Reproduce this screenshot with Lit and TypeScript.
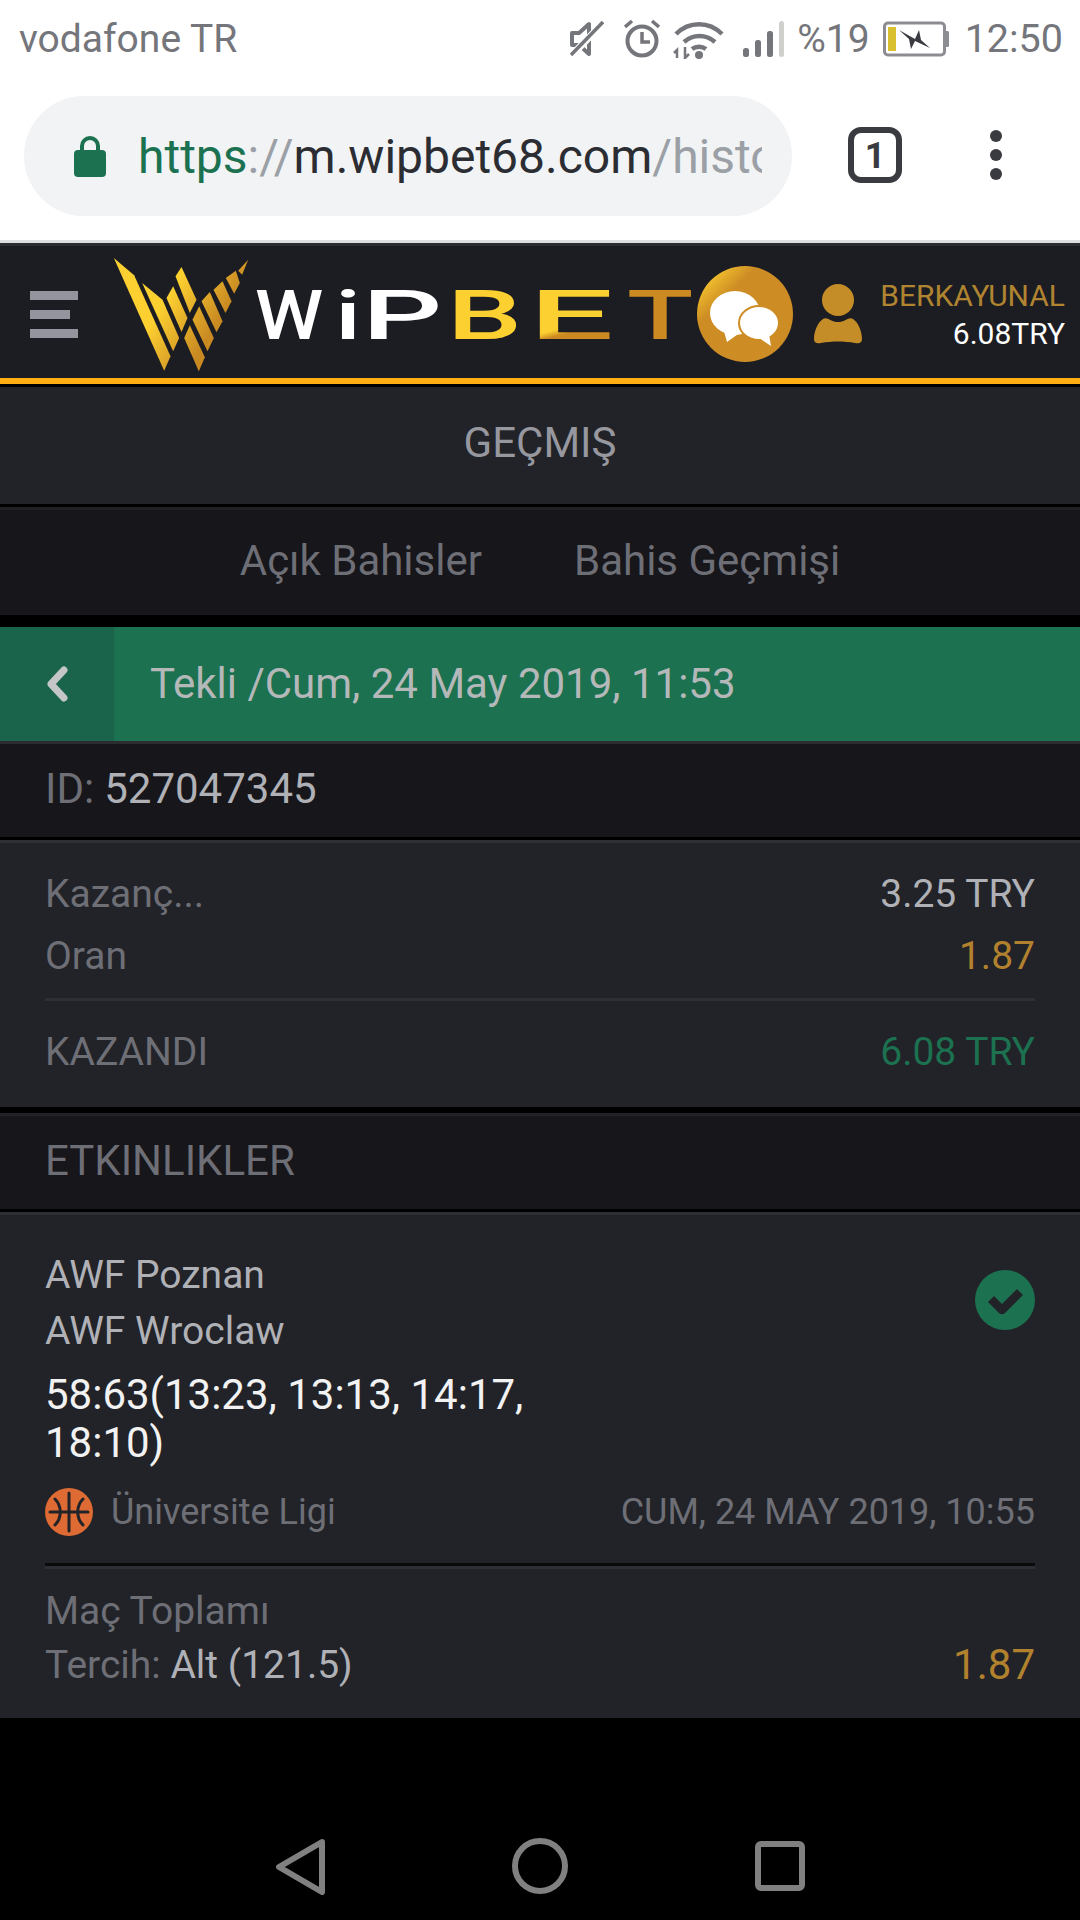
import { LitElement, html, css } from "lit";
import { customElement } from "lit/decorators.js";

@customElement("app-root")
export class AppRoot extends LitElement {
  static styles = css`
    :host { display: block; width: 1080px; height: 1920px; background: #000; font-family: Roboto, "Noto Sans", sans-serif; overflow: hidden; }
    * { box-sizing: border-box; }
    .page { display: flex; flex-direction: column; height: 1920px; }
    .status { height: 77px; background: #fff; display: flex; align-items: center; padding: 0 17px 0 19px; color: #75767b; flex: none; }
    .carrier { font-size: 39px; flex: 1; }
    .sicons { display: flex; align-items: center; }
    .sicons svg { display: block; flex: none; }
    .pct { font-size: 39px; margin: 0 13px 0 12px; }
    .clock { font-size: 39.5px; margin-left: 16px; }
    .mute { margin-right: 20px; }
    .alarm { margin-right: 13px; }
    .wifi { margin-right: 17px; }
    .toolbar { height: 163px; background: #fff; display: flex; align-items: flex-start; padding: 19px 0 0 24px; flex: none; }
    .pill { width: 768px; height: 120px; border-radius: 60px; background: #f1f3f4; display: flex; align-items: center; padding-left: 50px; flex: none; }
    .lock { flex: none; margin-right: 32px; }
    .url { width: 624px; overflow: hidden; white-space: nowrap; font-size: 48px; color: #9aa0a6; }
    .g { color: #1b7150; }
    .h { color: #2b2d33; }
    .tab { margin: 31px 0 0 56px; flex: none; display: block; }
    .dots { margin: 31px 0 0 88px; flex: none; display: block; }
    .hairline { height: 3px; background: #dedede; flex: none; }
    .header { height: 141px; background: #1c1d22; border-top: 3px solid #2b2c31; border-bottom: 6px solid #ffae14; display: flex; align-items: flex-start; flex: none; }
    .burger { display: flex; flex-direction: column; gap: 10px; margin: 45px 0 0 30px; width: 48px; flex: none; }
    .burger i { display: block; height: 9px; background: #93949e; }
    .burger i:nth-child(2) { width: 40px; }
    .mark { margin: 12px 0 0 35px; flex: none; display: block; }
    .word { display: flex; margin: 40px 0 0 8px; width: 441px; flex: none; height: 60px; font-size: 68px; line-height: 60px; font-weight: 500; gap: 18px; white-space: nowrap; }
    .word span { display: block; width: 67px; transform-origin: 0 50%; color: #fff; }
    .word .l1 { transform: translateX(-3px) scaleX(1.14); }
    .word .ii { width: 10px; transform: translateX(-8px) scaleX(1.5); }
    .word .l3 { transform: translateX(-9px) scaleX(1.85); }
    .word .y { color: #fdd031; transform: translateX(-9px) scaleX(1.75); }
    .word .e { background: linear-gradient(150deg, #fdd031 62%, #cc8a22 70%); -webkit-background-clip: text; background-clip: text; color: transparent; width: 38px; transform: translateX(-12px) scaleX(2.2); margin-right: 29px; }
    .word .o { color: #cc8a22; transform: translateX(1px) scaleX(1.6); }
    .chat { flex: none; margin: 20px 0 0 -2px; display: block; }
    .user { flex: none; margin: 38px 0 0 21px; display: block; }
    .acct { flex: 1; margin: 31px 15px 0 0; text-align: right; font-size: 30px; line-height: 38px; color: #fff; }
    .acct div:first-child { color: #b08430; }
    .gap3 { height: 3px; background: #000; flex: none; }
    .title { height: 117px; background: #212328; display: flex; align-items: center; justify-content: center; font-size: 42px; color: #97979f; padding-bottom: 6px; flex: none; }
    .tabs { height: 108px; background: #16161b; border-top: 3px solid #1f1f24; display: flex; align-items: center; justify-content: center; gap: 92px; font-size: 42px; color: #6e6f76; padding-bottom: 4px; flex: none; }
    .gap12 { height: 12px; background: #000; flex: none; }
    .green { height: 117px; background: #1c7150; border-bottom: 3px solid #2a2c30; display: flex; align-items: stretch; flex: none; }
    .back { width: 114px; background: #19644a; display: flex; align-items: center; justify-content: center; flex: none; }
    .gtext { display: flex; align-items: center; padding: 0 0 2px 36px; font-size: 42px; color: #b5b8b9; }
    .idrow { height: 93px; background: #16161b; display: flex; align-items: center; padding: 0 0 4px 45px; font-size: 42px; color: #6e6f76; flex: none; }
    .idrow b { font-weight: 400; color: #b0b1b6; margin-left: 10px; }
    .summary { height: 267px; background: #212328; border-top: 3px solid #2d2f35; padding: 20px 45px 0; flex: none; }
    .row { display: flex; justify-content: space-between; align-items: center; height: 62px; font-size: 39px; color: #6e6f76; }
    .row .w { color: #b0b1b6; }
    .row .a { color: #b1812e; }
    .row .v { color: #1c7150; }
    .div1 { height: 3px; background: #2d2f35; margin: 11px 0 20px; }
    .gap6 { height: 6px; background: #000; flex: none; }
    .etk { height: 96px; background: #16161b; border-top: 3px solid #212328; display: flex; align-items: center; padding: 0 0 5px 45px; font-size: 42px; color: #6e6f76; flex: none; }
    .card { height: 506px; background: #212328; border-top: 3px solid #2d2f35; padding: 32px 45px 0; flex: none; color: #6e6f76; }
    .teams { display: flex; justify-content: space-between; align-items: center; font-size: 39px; line-height: 56px; color: #b0b1b6; }
    .check { display: block; margin-bottom: 6px; }
    .score { font-size: 42px; line-height: 48px; color: #f2f2f2; margin-top: 12px; width: 560px; }
    .meta { display: flex; align-items: center; height: 48px; margin-top: 21px; font-size: 36px; }
    .meta svg { display: block; margin-right: 18px; }
    .meta .when { margin-left: auto; }
    .div2 { height: 6px; margin: 27px 0 14px; background: linear-gradient(#0a0a0d 50%, #2d2f35 50%); }
    .market { font-size: 39px; line-height: 56px; }
    .pick { display: flex; justify-content: space-between; font-size: 39px; line-height: 52px; }
    .pick b { font-weight: 400; color: #b0b1b6; }
    .pick .odd { color: #b1812e; font-size: 42px; }
    .nav { flex: 1; background: #000; display: flex; align-items: flex-start; padding: 120px 0 0 276px; }
    .nav svg { display: block; flex: none; }
    .n1 { margin-top: 1px; }
    .n2 { margin-left: 187px; }
    .n3 { margin: 3px 0 0 187px; }
  `;

  render() {
    return html`<div class="page">
      <div class="status">
        <div class="carrier">vodafone TR</div>
        <div class="sicons">
          <svg class="mute" width="34" height="40" viewBox="0 0 34 40"><path d="M2 14h7l10-9v30l-10-9H2z" fill="none" stroke="#75767b" stroke-width="4" stroke-linejoin="round"/><path d="M1 37 33 4" stroke="#fff" stroke-width="7"/><path d="M1 36 33 3" stroke="#75767b" stroke-width="3.5"/></svg>
          <svg class="alarm" width="36" height="40" viewBox="0 0 36 40"><circle cx="18" cy="22" r="14.5" fill="none" stroke="#75767b" stroke-width="4"/><path d="M18 13v10h8" fill="none" stroke="#75767b" stroke-width="3.5"/><path d="M1 8 8 2M35 8 28 2" stroke="#75767b" stroke-width="3.5"/></svg>
          <svg class="wifi" width="52" height="40" viewBox="0 0 52 40"><path d="M3 15C16 2 36 2 49 15M11 23c9-8 22-8 31 0M19 30c4-3 10-3 14 0" fill="none" stroke="#75767b" stroke-width="4.5"/><circle cx="26" cy="36" r="4" fill="#75767b"/><path d="M4 39v-8l-3 3M12 28v11l4-4" fill="none" stroke="#75767b" stroke-width="2.5"/></svg>
          <svg width="43" height="38" viewBox="0 0 43 38"><rect x="1" y="28" width="6" height="9" rx="2.5" fill="#75767b"/><rect x="13" y="20" width="6" height="17" rx="2.5" fill="#75767b"/><rect x="25" y="11" width="6" height="26" rx="2.5" fill="#75767b"/><rect x="37" y="1" width="5" height="36" rx="2.5" fill="#cfcfcc"/></svg>
          <span class="pct">%19</span>
          <svg width="66" height="36" viewBox="0 0 66 36"><rect x="1.5" y="2" width="60" height="32" rx="3.5" fill="#fff" stroke="#8c8d92" stroke-width="3"/><rect x="62" y="10" width="4" height="16" rx="1.5" fill="#8c8d92"/><rect x="5" y="6" width="8" height="24" fill="#d9c02e"/><path d="M16 9 32 18 36 9 38 19 47 27 32 20 28 28 26 18z" fill="#3a3b40"/></svg>
          <span class="clock">12:50</span>
        </div>
      </div>

      <div class="toolbar">
        <div class="pill">
          <svg class="lock" width="32" height="42" viewBox="0 0 32 42"><path d="M8 18v-7a8 8 0 0 1 16 0v7" fill="none" stroke="#1b7150" stroke-width="4"/><rect y="15" width="32" height="27" rx="4" fill="#1b7150"/></svg>
          <div class="url"><span class="g">https</span>://<span class="h">m.wipbet68.com</span>/history</div>
        </div>
        <svg class="tab" width="54" height="56" viewBox="0 0 54 56"><rect x="3" y="3" width="48" height="50" rx="10" fill="none" stroke="#3a3b40" stroke-width="6"/><text x="27" y="41" font-family="Roboto" font-weight="700" font-size="36" text-anchor="middle" fill="#3a3b40">1</text></svg>
        <svg class="dots" width="12" height="56" viewBox="0 0 12 56"><circle cx="6" cy="9" r="6" fill="#3a3b40"/><circle cx="6" cy="28" r="6" fill="#3a3b40"/><circle cx="6" cy="47" r="6" fill="#3a3b40"/></svg>
      </div>
      <div class="hairline"></div>

      <div class="header">
        <div class="burger"><i></i><i></i><i></i></div>
        <svg class="mark" width="137" height="115" viewBox="340 70 410 345">
          <defs><linearGradient id="wg" gradientUnits="userSpaceOnUse" x1="470" y1="240" x2="610" y2="330"><stop offset="0" stop-color="#fdd031"/><stop offset="1" stop-color="#c98a22"/></linearGradient></defs>
          <g fill="url(#wg)">
            <polygon points="342,70 403,122 512,365 493,408"/>
            <polygon points="427,145 488,195 538,310 520,350"/>
            <polygon points="500,190 520,155 563,250 545,292"/>
            <polygon points="527,125 545,97 590,195 570,235"/>
            <polygon points="553,310 570,272 615,368 597,410"/>
            <polygon points="578,255 598,215 642,310 623,350"/>
            <polygon points="605,200 630,172 668,260 650,293"/>
            <polygon points="641,165 668,140 695,200 677,235"/>
            <polygon points="678,130 708,108 720,145 703,177"/>
            <polygon points="715,108 745,75 727,120"/>
          </g>
        </svg>
        <div class="word"><span class="l1">W</span><span class="ii">i</span><span class="l3">P</span><span class="y">B</span><span class="e">E</span><span class="o">T</span></div>
        <svg class="chat" width="96" height="96" viewBox="0 0 96 96">
          <defs><linearGradient id="cg" x1="0" y1="0" x2="0.7" y2="0.7"><stop offset="0.1" stop-color="#fdd031"/><stop offset="0.45" stop-color="#cd8c24"/></linearGradient></defs>
          <circle cx="48" cy="48" r="48" fill="url(#cg)"/>
          <ellipse cx="38" cy="47" rx="25" ry="22" fill="#fff"/><path d="M26 62l4 14 14-10z" fill="#fff"/>
          <ellipse cx="62" cy="57" rx="20" ry="17" fill="#fff" stroke="#cd8c24" stroke-width="2"/><path d="M62 72l12 8-2-12z" fill="#fff"/>
        </svg>
        <svg class="user" width="48" height="60" viewBox="0 0 48 60"><circle cx="24" cy="16" r="16" fill="#c48d28"/><path d="M9 35c4-3 8 3 15 3s11-6 15-3c5 3 9 12 9 20 0 4-3 5-7 4-11-2-23-2-34 0-4 1-7 0-7-4 0-8 4-17 9-20z" fill="#c48d28"/></svg>
        <div class="acct"><div>BERKAYUNAL</div><div>6.08TRY</div></div>
      </div>
      <div class="gap3"></div>

      <div class="title">GEÇMIŞ</div>
      <div class="gap3"></div>
      <div class="tabs"><span>Açık Bahisler</span><span>Bahis Geçmişi</span></div>
      <div class="gap12"></div>

      <div class="green">
        <div class="back"><svg width="22" height="36" viewBox="0 0 22 36"><path d="M18 4 5 18l13 14" fill="none" stroke="#c4c6c8" stroke-width="7" stroke-linecap="round" stroke-linejoin="round"/></svg></div>
        <div class="gtext">Tekli /Cum, 24 May 2019, 11:53</div>
      </div>
      <div class="idrow">ID:<b>527047345</b></div>
      <div class="gap3"></div>

      <div class="summary">
        <div class="row"><span>Kazanç...</span><span class="w">3.25 TRY</span></div>
        <div class="row"><span>Oran</span><span class="a">1.87</span></div>
        <div class="div1"></div>
        <div class="row"><span>KAZANDI</span><span class="v">6.08 TRY</span></div>
      </div>
      <div class="gap6"></div>
      <div class="etk">ETKINLIKLER</div>
      <div class="gap3"></div>

      <div class="card">
        <div class="teams">
          <div><div>AWF Poznan</div><div>AWF Wroclaw</div></div>
          <svg class="check" width="60" height="60" viewBox="0 0 60 60"><circle cx="30" cy="30" r="30" fill="#1c7150"/><path d="M16 29l11 11 18-18" fill="none" stroke="#212328" stroke-width="8.5" stroke-linejoin="round"/></svg>
        </div>
        <div class="score">58:63(13:23, 13:13, 14:17, 18:10)</div>
        <div class="meta">
          <svg width="48" height="48" viewBox="0 0 48 48"><circle cx="24" cy="24" r="24" fill="#dd6b33"/><path d="M24 5v38M5 24h38M10 11c7 7 7 19 0 26M38 11c-7 7-7 19 0 26" fill="none" stroke="#212328" stroke-width="3" stroke-linecap="round"/></svg>
          <span>Üniversite Ligi</span>
          <span class="when">CUM, 24 MAY 2019, 10:55</span>
        </div>
        <div class="div2"></div>
        <div class="market">Maç Toplamı</div>
        <div class="pick"><span>Tercih: <b>Alt (121.5)</b></span><span class="odd">1.87</span></div>
      </div>

      <div class="nav">
        <svg class="n1" width="49" height="56" viewBox="0 0 49 56"><path d="M46 3 3 28l43 25z" fill="none" stroke="#808080" stroke-width="6" stroke-linejoin="round"/></svg>
        <svg class="n2" width="56" height="56" viewBox="0 0 56 56"><circle cx="28" cy="28" r="25" fill="none" stroke="#808080" stroke-width="6"/></svg>
        <svg class="n3" width="50" height="50" viewBox="0 0 50 50"><rect x="3" y="3" width="44" height="44" rx="3" fill="none" stroke="#808080" stroke-width="6"/></svg>
      </div>
    </div>`;
  }
}
